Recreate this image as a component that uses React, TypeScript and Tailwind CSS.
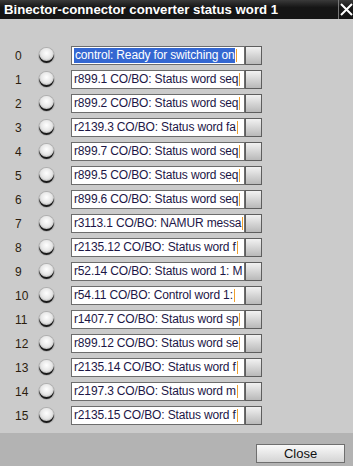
const rows = [
  "control: Ready for switching on",
  "r899.1 CO/BO: Status word seq",
  "r899.2 CO/BO: Status word seq",
  "r2139.3 CO/BO: Status word fa",
  "r899.7 CO/BO: Status word seq",
  "r899.5 CO/BO: Status word seq",
  "r899.6 CO/BO: Status word seq",
  "r3113.1 CO/BO: NAMUR messa",
  "r2135.12 CO/BO: Status word f",
  "r52.14 CO/BO: Status word 1: M",
  "r54.11 CO/BO: Control word 1:",
  "r1407.7 CO/BO: Status word sp",
  "r899.12 CO/BO: Status word se",
  "r2135.14 CO/BO: Status word f",
  "r2197.3 CO/BO: Status word m",
  "r2135.15 CO/BO: Status word f",
];

const Led = () => (
  <div className="w-[15px] h-[15px] rounded-full bg-[radial-gradient(circle_at_50%_35%,#ffffff_0%,#e6e6e6_45%,#9a9a9a_80%)] shadow-[inset_0_-2px_0_#1a1a1a,0_0_0_1px_#b0b0b0]" />
);

export default function App() {
  return (
    <div
      className="w-[353px] h-[466px] flex flex-col bg-[#cbcbcb] overflow-hidden"
      style={{ fontFamily: "'Liberation Sans', Arial, sans-serif" }}
    >
      <div className="h-[19px] flex items-stretch bg-gradient-to-b from-[#3a3a3a] to-[#151515] to-[40%]">
        <div className="flex-1 pl-[4px] text-white font-bold text-[13.2px] leading-[19px] whitespace-nowrap">
          Binector-connector converter status word 1
        </div>
        <div className="w-px bg-[#777]" />
        <div className="w-[14px] flex items-center justify-center">
          <svg width="13" height="13" viewBox="0 0 13 13">
            <path d="M1 1L12 12M12 1L1 12" stroke="white" strokeWidth="2" />
          </svg>
        </div>
      </div>

      <div className="flex-1 flex flex-col gap-[5px] pt-[27px] pl-[15px]">
        {rows.map((label, i) => (
          <div key={i} className="h-[19px] flex items-center">
            <span className="w-[24px] text-[12px] text-[#2b1d0e]">{i}</span>
            <div className="w-[32px] flex">
              <Led />
            </div>
            <div className="w-[174px] h-[19px] bg-white border border-[#6d6d6d] overflow-hidden flex items-center pl-[2px] pr-[1px]">
              <div className="flex-1 overflow-hidden whitespace-nowrap flex items-center">
                <span
                  className={
                    i === 0
                      ? "bg-[#3467d1] text-white text-[12px] leading-[15px] px-px tracking-[-0.15px]"
                      : "text-[#1c1646] text-[12px] leading-[15px] tracking-[-0.15px]"
                  }
                >
                  {label}
                </span>
                <div className="w-px h-[13px] bg-[#f0a030] shrink-0 ml-px" />
              </div>
            </div>
            <div className="w-[17px] h-[19px] border border-[#5e5e5e] bg-gradient-to-b from-[#f2f2f2] to-[#b9b9b9]" />
          </div>
        ))}
      </div>

      <div className="h-[33px] bg-[#b3b3b3] flex items-start justify-end pt-[11px] pr-[8px]">
        <button className="w-[89px] h-[19px] border border-[#6f6f6f] bg-gradient-to-b from-[#fafafa] to-[#d4d4d4] text-[13px] leading-[17px] text-[#111]">
          Close
        </button>
      </div>
    </div>
  );
}
